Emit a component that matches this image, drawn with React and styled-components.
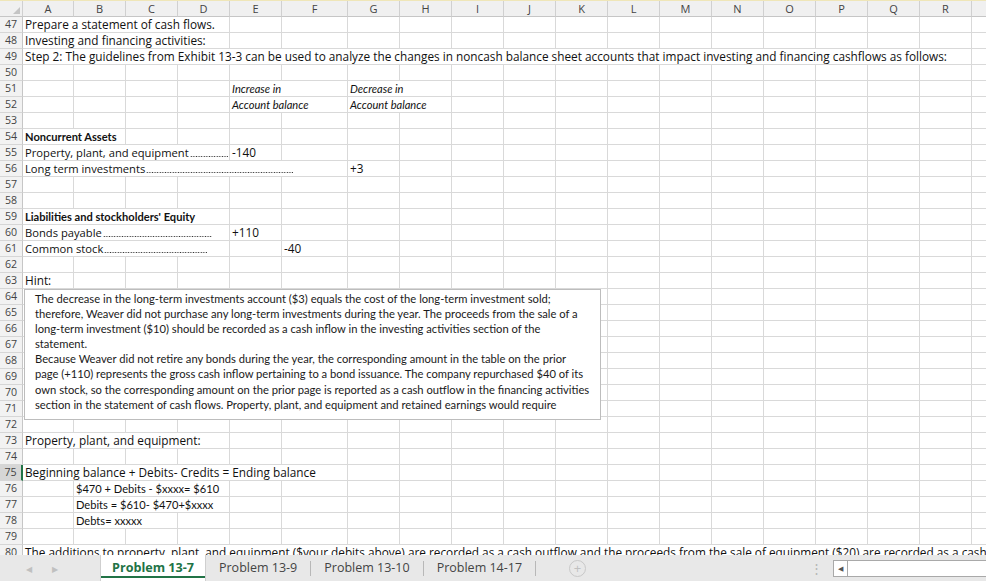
import React from 'react';
import styled, { createGlobalStyle } from 'styled-components';

const GlobalStyle = createGlobalStyle`
  html, body { margin: 0; padding: 0; background: #fff; overflow: hidden; }
  body { font-family: "Open Sans", "Liberation Sans", sans-serif; }
`;

const COLS = [51, 52, 52, 52, 52, 66, 52, 52, 52, 52, 52, 52, 52, 52, 52, 52, 52, 52, 60];
const LETTERS = 'ABCDEFGHIJKLMNOPQRS'.split('');
const TEMPLATE = `23px ${COLS.map(c => c + 'px').join(' ')}`;

const Page = styled.div`
  width: 986px;
  height: 581px;
  display: flex;
  flex-direction: column;
  overflow: hidden;
`;

const Sheet = styled.div`
  position: relative;
  height: 555px;
  overflow: hidden;
  flex: none;
`;

const HeaderRow = styled.div`
  display: grid;
  grid-template-columns: ${TEMPLATE};
  height: 17px;
  box-sizing: border-box;
  border-top: 1px solid #efe6b8;
`;

const HeadCell = styled.div`
  box-sizing: border-box;
  background: #f0f0f0;
  border-right: 1px solid #d0d0d0;
  border-bottom: 1px solid #c6c6c6;
  color: #444;
  font-size: 11px;
  line-height: 15px;
  text-align: center;
  overflow: hidden;
`;

const Corner = styled(HeadCell)`
  position: relative;
  &::after {
    content: '';
    position: absolute;
    right: 2px;
    bottom: 2px;
    border-style: solid;
    border-width: 0 0 7px 7px;
    border-color: transparent transparent #c4c4c4 transparent;
  }
`;

const Row = styled.div`
  display: grid;
  grid-template-columns: ${TEMPLATE};
  height: 16px;
`;

const RowHead = styled.div`
  box-sizing: border-box;
  background: ${p => (p.$active ? '#d6d6d6' : '#f2f2f2')};
  border-right: ${p => (p.$active ? '2px solid #217346' : '1px solid #c6c6c6')};
  border-bottom: 1px solid #d6d6d6;
  color: #444;
  font-size: 10.6px;
  line-height: 15px;
  text-align: center;
`;

const Cell = styled.div`
  grid-column: span ${p => p.$span || 1};
  box-sizing: border-box;
  border-right: 1px solid #d9d9d9;
  border-bottom: 1px solid #d9d9d9;
  padding-left: 2px;
  font-size: 11.8px;
  line-height: 15px;
  color: #111;
  white-space: nowrap;
  overflow: hidden;
  font-style: ${p => (p.$italic ? 'italic' : 'normal')};
  font-family: ${p => (p.$calibri ? '"Lato", "Open Sans", sans-serif' : '"Open Sans", sans-serif')};
  font-weight: ${p => (p.$bold ? 700 : 400)};
  ${p => p.$calibri && 'font-size: 11.1px;'}
`;

const Leader = styled.div`
  display: flex;
  width: ${p => p.$w}px;
`;

const LeaderText = styled.span`
  flex: none;
  font-size: 11.2px;
`;

// dotted leader line filling the rest of the label
const Dots = styled.span`
  flex: 1;
  margin-left: 1px;
  height: 15px;
  background-image: radial-gradient(circle, #333 0.55px, transparent 0.95px);
  background-size: 2.6px 3px;
  background-repeat: repeat-x;
  background-position: 0 10px;
`;

const TextBox = styled.div`
  position: absolute;
  left: 24px;
  top: 289px;
  width: 577px;
  height: 131px;
  box-sizing: border-box;
  background: #fff;
  border: 1px solid #bdbdbd;
  padding: 1px 8px 0 10px;
  font-family: "Lato", sans-serif;
  font-size: 11.2px;
  line-height: 15.1px;
  color: #1a1a1a;
  overflow: hidden;
`;

const Line = styled.div`
  white-space: nowrap;
`;

const TabBar = styled.div`
  height: 26px;
  flex: none;
  display: flex;
  align-items: stretch;
  background: #e8e8e8;
  font-size: 12.5px;
  color: #444;
`;

const Nav = styled.div`
  width: 100px;
  display: flex;
  align-items: center;
  gap: 20px;
  padding-left: 26px;
  box-sizing: border-box;
  color: #c0c0c0;
  font-size: 8px;
`;

const Tab = styled.div`
  display: flex;
  align-items: center;
  padding: 0 ${p => (p.$active ? 11 : 13)}px 2px;
  box-sizing: border-box;
  position: relative;
  background: ${p => (p.$active ? '#fff' : 'transparent')};
  color: ${p => (p.$active ? '#217346' : '#444')};
  font-weight: ${p => (p.$active ? 700 : 400)};
  font-size: ${p => (p.$active ? '12.6px' : '12.5px')};
  border-left: ${p => (p.$active ? '1px solid #cfcfcf' : 'none')};
  border-right: ${p => (p.$active ? '1px solid #cfcfcf' : 'none')};
  &::after {
    content: '';
    position: absolute;
    left: 0;
    right: 0;
    bottom: 3px;
    height: 2px;
    background: ${p => (p.$active ? '#217346' : 'transparent')};
  }
`;

const Sep = styled.div`
  width: 1px;
  background: #b8b8b8;
  margin: 6px 0 5px;
`;

const AddBtn = styled.div`
  width: 15px;
  height: 15px;
  border-radius: 50%;
  border: 1px solid #c8c8c8;
  color: #c0c0c0;
  font-size: 13px;
  line-height: 14px;
  text-align: center;
  align-self: center;
  margin-left: 33px;
`;

const Spacer = styled.div`
  flex: 1;
`;

const Kebab = styled.div`
  color: #b5b5b5;
  font-size: 13px;
  align-self: center;
  margin-right: 10px;
`;

const Scroll = styled.div`
  width: 152px;
  height: 15px;
  align-self: center;
  margin-top: 1px;
  background: #fff;
  border: 1px solid #a9a9a9;
  border-right: none;
  display: flex;
`;

const ScrollBtn = styled.div`
  width: 13px;
  border-right: 1px solid #a9a9a9;
  color: #555;
  font-size: 7px;
  display: flex;
  align-items: center;
  justify-content: center;
`;

const leader = (text, w) => (
  <Leader $w={w}>
    <LeaderText>{text}</LeaderText>
    <Dots />
  </Leader>
);

const ROWS = {
  47: [{ c: 0, span: 4, t: 'Prepare a statement of cash flows.' }],
  48: [{ c: 0, span: 4, t: 'Investing and financing activities:' }],
  49: [{ c: 0, span: 18, t: 'Step 2: The guidelines from Exhibit 13-3 can be used to analyze the changes in noncash balance sheet accounts that impact investing and financing cashflows as follows:' }],
  51: [{ c: 4, span: 2, t: 'Increase in', italic: true, calibri: true }, { c: 6, span: 2, t: 'Decrease in', italic: true, calibri: true }],
  52: [{ c: 4, span: 2, t: 'Account balance', italic: true, calibri: true }, { c: 6, span: 2, t: 'Account balance', italic: true, calibri: true }],
  54: [{ c: 0, span: 2, t: 'Noncurrent Assets', bold: true, calibri: true }],
  55: [{ c: 0, span: 4, t: leader('Property, plant, and equipment', 203) }, { c: 4, t: '-140' }],
  56: [{ c: 0, span: 6, t: leader('Long term investments', 268) }, { c: 6, t: '+3' }],
  59: [{ c: 0, span: 4, t: "Liabilities and stockholders' Equity", bold: true, calibri: true }],
  60: [{ c: 0, span: 4, t: leader('Bonds payable', 187) }, { c: 4, t: '+110' }],
  61: [{ c: 0, span: 4, t: leader('Common stock', 182) }, { c: 5, t: '-40' }],
  63: [{ c: 0, t: 'Hint:' }],
  73: [{ c: 0, span: 4, t: 'Property, plant, and equipment:' }],
  75: [{ c: 0, span: 6, t: 'Beginning balance + Debits- Credits = Ending balance' }],
  76: [{ c: 1, span: 3, t: '$470 + Debits - $xxxx= $610', calibri: true }],
  77: [{ c: 1, span: 3, t: 'Debits = $610- $470+$xxxx', calibri: true }],
  78: [{ c: 1, span: 2, t: 'Debts= xxxxx', calibri: true }],
  80: [{ c: 0, span: 19, t: 'The additions to property, plant, and equipment ($your debits above) are recorded as a cash outflow and the proceeds from the sale of equipment ($20) are recorded as a cash inflow.' }],
};

const HINT = [
  'The decrease in the long-term investments account ($3) equals the cost of the long-term investment sold;',
  'therefore, Weaver did not purchase any long-term investments during the year. The proceeds from the sale of a',
  'long-term investment ($10) should be recorded as a cash inflow in the investing activities section of the',
  'statement.',
  'Because Weaver did not retire any bonds during the year, the corresponding amount in the table on the prior',
  'page (+110) represents the gross cash inflow pertaining to a bond issuance. The company repurchased $40 of its',
  'own stock, so the corresponding amount on the prior page is reported as a cash outflow in the financing activities',
  'section in the statement of cash flows. Property, plant, and equipment and retained earnings would require',
];

const buildCells = n => {
  const defs = ROWS[n] || [];
  const out = [];
  let c = 0;
  while (c < COLS.length) {
    const d = defs.find(x => x.c === c);
    if (d) {
      out.push(
        <Cell key={c} $span={d.span} $italic={d.italic} $bold={d.bold} $calibri={d.calibri}>
          {d.t}
        </Cell>
      );
      c += d.span || 1;
    } else {
      out.push(<Cell key={c} />);
      c += 1;
    }
  }
  return out;
};

const rowNums = [];
for (let i = 47; i <= 80; i++) rowNums.push(i);

const App = () => (
  <Page>
    <GlobalStyle />
    <Sheet>
      <HeaderRow>
        <Corner />
        {LETTERS.map((l, i) => (
          <HeadCell key={l}>{i < 18 ? l : ''}</HeadCell>
        ))}
      </HeaderRow>
      {rowNums.map(n => (
        <Row key={n}>
          <RowHead $active={n === 75}>{n}</RowHead>
          {buildCells(n)}
        </Row>
      ))}
      <TextBox>
        {HINT.map((l, i) => (
          <Line key={i}>{l}</Line>
        ))}
      </TextBox>
    </Sheet>
    <TabBar>
      <Nav>
        <span>◀</span>
        <span>▶</span>
      </Nav>
      <Tab $active>Problem 13-7</Tab>
      <Tab>Problem 13-9</Tab>
      <Sep />
      <Tab>Problem 13-10</Tab>
      <Sep />
      <Tab>Problem 14-17</Tab>
      <Sep />
      <AddBtn>+</AddBtn>
      <Spacer />
      <Kebab>⋮</Kebab>
      <Scroll>
        <ScrollBtn>◀</ScrollBtn>
      </Scroll>
    </TabBar>
  </Page>
);

export default App;
